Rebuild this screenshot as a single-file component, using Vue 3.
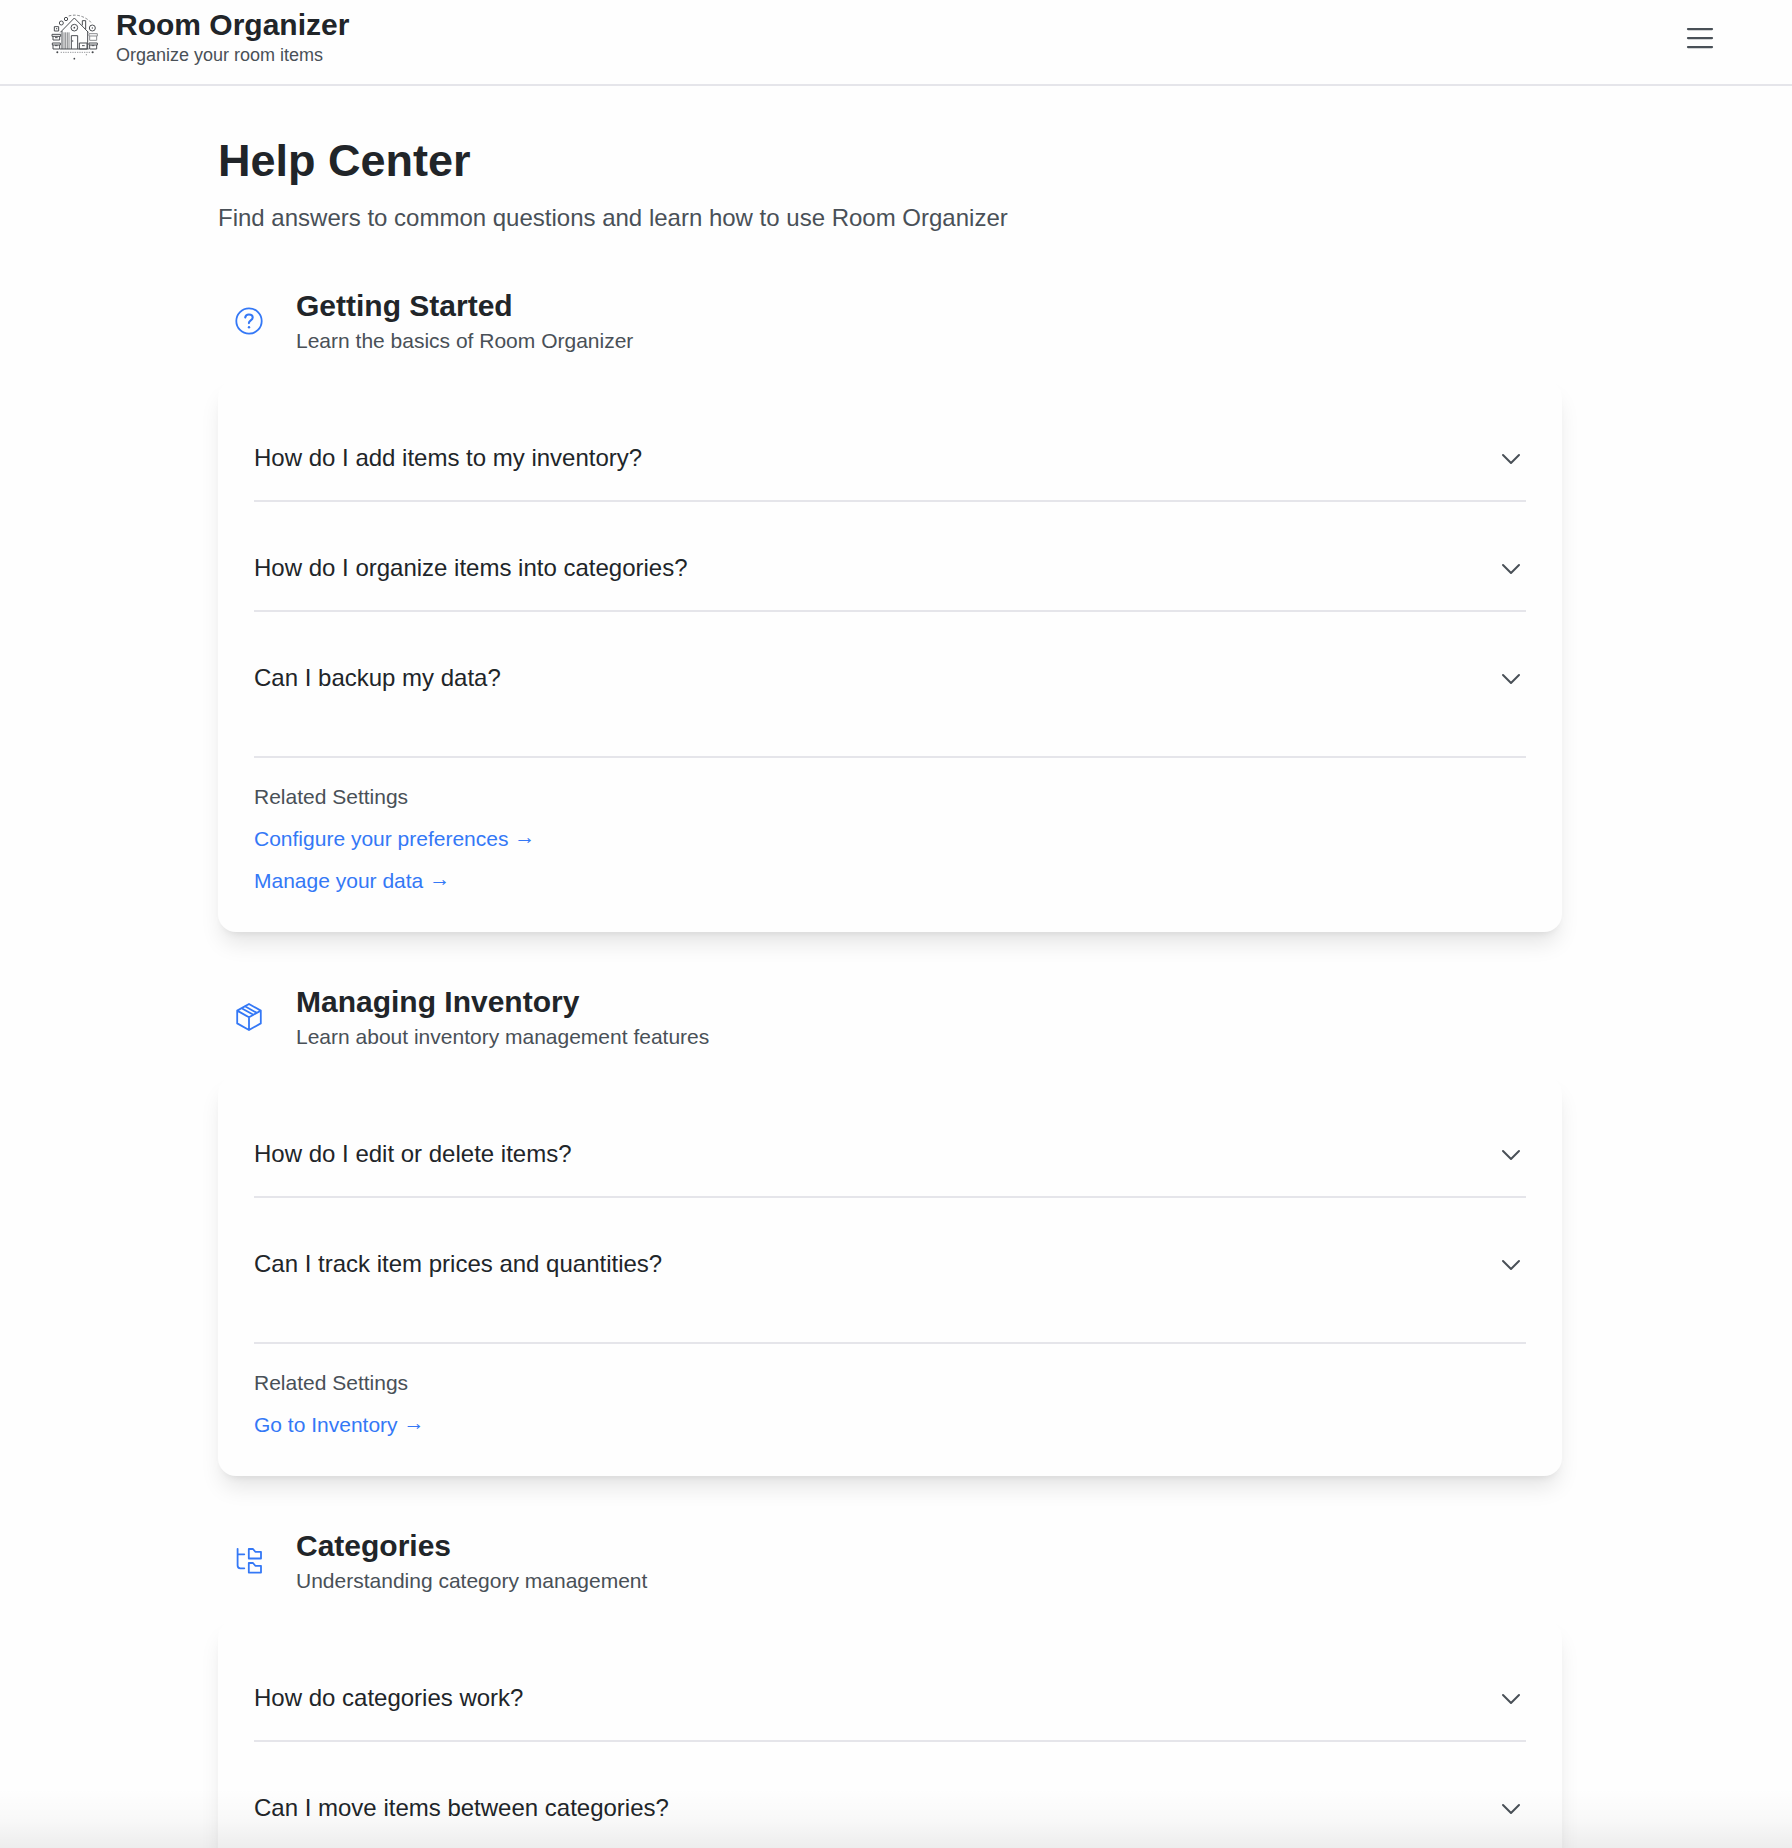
<script setup>
const sections = [
  {
    icon: 'help',
    title: 'Getting Started',
    subtitle: 'Learn the basics of Room Organizer',
    questions: [
      'How do I add items to my inventory?',
      'How do I organize items into categories?',
      'Can I backup my data?',
    ],
    links: ['Configure your preferences', 'Manage your data'],
  },
  {
    icon: 'box',
    title: 'Managing Inventory',
    subtitle: 'Learn about inventory management features',
    questions: ['How do I edit or delete items?', 'Can I track item prices and quantities?'],
    links: ['Go to Inventory'],
  },
  {
    icon: 'tree',
    title: 'Categories',
    subtitle: 'Understanding category management',
    questions: ['How do categories work?', 'Can I move items between categories?'],
    links: [],
  },
]
</script>

<template>
  <div class="page">
    <header class="topbar">
      <div class="brand">
        <svg class="logo" viewBox="33 24 144 144" fill="none" stroke="#4b4e52" stroke-width="3">
          <path d="M61 82 103 39l42 43M66 78v54M143 79v53M127 61V47h10v25" />
          <path d="M72 82v50M77 82v50M82 82v50M87 82v50" stroke-width="2" />
          <path d="M94 132V92h19v40M60 132h86" />
          <circle cx="103" cy="68" r="10" />
          <circle cx="157" cy="69" r="9" />
          <circle cx="64" cy="54" r="6" />
          <circle cx="78" cy="42" r="5" />
          <path d="M86 33q32-9 62 14l8 9" stroke-dasharray="8 5" stroke-width="2" />
          <path d="M43 65h13v13H43zM36 88h26v6H36zM39 94v11h20V94M37 114h24v6H37zM39 120v12h20v-12" />
          <path d="M147 86h25v7h-25zM149 93v13h21V93" stroke="#8b8d90" />
          <path d="M118 114h23v18h-23zM147 114h25v6h-25zM149 120v12h21v-12M45 98h8M45 122h8M155 122h8M126 122h8" />
          <path d="M62 142h92" stroke="#9b9da0" stroke-dasharray="4 3" />
          <g fill="#44474b" stroke="none">
            <circle cx="103" cy="68" r="2.5" /><circle cx="157" cy="69" r="2" />
            <circle cx="50" cy="71" r="2" /><circle cx="98" cy="108" r="2" />
            <circle cx="52" cy="142" r="3" /><circle cx="158" cy="142" r="3" />
            <circle cx="103" cy="161" r="2.6" /><circle cx="139" cy="149" r="1.5" />
          </g>
        </svg>
        <div>
          <div class="brand-name">Room Organizer</div>
          <div class="brand-tag">Organize your room items</div>
        </div>
      </div>
      <button class="menu" aria-label="Menu">
        <svg viewBox="0 0 24 24" fill="none" stroke="currentColor" stroke-width="1.5" stroke-linecap="round">
          <path d="M4 6h16M4 12h16M4 18h16" />
        </svg>
      </button>
    </header>

    <main class="content">
      <h1>Help Center</h1>
      <p class="lead">Find answers to common questions and learn how to use Room Organizer</p>

      <section v-for="s in sections" :key="s.title">
        <div class="section-head">
          <div class="icon-box">
            <svg v-if="s.icon === 'help'" viewBox="0 0 28 28">
              <circle cx="14" cy="14" r="12.7" />
              <path d="M10.2 10.5c.3-2 1.8-3 3.7-3 2.2 0 3.8 1.2 3.8 3.1 0 2.9-3.8 2.8-3.8 5.5" stroke-width="2.1" />
              <circle cx="14" cy="20.2" r="1.2" fill="currentColor" stroke="none" />
            </svg>
            <svg v-else-if="s.icon === 'box'" viewBox="0 0 28 28">
              <path d="M14 1 25.8 7.6v12.8L14 27 2.2 20.4V7.6zM2.2 7.6 14 14.3l11.8-6.7M14 14.3V27M10 3.3l11.8 6.6M6.6 5.2l11.8 6.6" />
            </svg>
            <svg v-else viewBox="0 0 28 28">
              <path d="M2.6 1.8v16.8q0 2.7 2.7 2.7h4M2.6 7.3h6.7" />
              <path d="M13.8 2h4.2l2.3 2.8H26v6.7H13.8zM13.8 16H18l2.3 2.8H26v6.8H13.8z" />
            </svg>
          </div>
          <div>
            <h2>{{ s.title }}</h2>
            <p>{{ s.subtitle }}</p>
          </div>
        </div>
        <div class="card">
          <div
            v-for="(q, i) in s.questions"
            :key="q"
            class="question"
            :class="{ last: i === s.questions.length - 1 }"
          >
            <span>{{ q }}</span>
            <svg class="chevron" viewBox="0 0 24 24"><path d="m4 9 8 8 8-8" /></svg>
          </div>
          <div v-if="s.links.length" class="related">
            <p>Related Settings</p>
            <a v-for="l in s.links" :key="l">{{ l }} <span class="arrow">→</span></a>
          </div>
        </div>
      </section>
    </main>
    <div class="bottom-fade"></div>
  </div>
</template>

<style>
body { margin: 0; background: #fefefe; }
</style>

<style scoped>
.page {
  position: relative;
  height: 1848px;
  overflow: hidden;
  background: #fefefe;
  color: #212529;
  font-family: "Liberation Sans", Arial, sans-serif;
}
h1, h2, p { margin: 0; }
.topbar {
  box-sizing: border-box;
  height: 86px;
  padding: 7px 74px 0 51px;
  border-bottom: 2px solid #e5e5ea;
  display: flex;
  align-items: flex-start;
  justify-content: space-between;
}
.brand { display: flex; gap: 17px; }
.logo { width: 48px; height: 48px; margin-top: 6px; }
.brand-name { font-size: 30px; line-height: 36px; font-weight: 700; }
.brand-tag { font-size: 18px; line-height: 24px; color: #495057; }
.menu {
  margin: 13px 0 0;
  padding: 0;
  border: 0;
  background: none;
  color: #495057;
  width: 36px;
  height: 36px;
}
.menu svg { display: block; width: 36px; height: 36px; }
.content { width: 1344px; margin-left: 218px; padding-top: 45px; }
h1 { font-size: 45px; line-height: 60px; }
.lead { margin-top: 9px; font-size: 24px; line-height: 36px; color: #495057; }
section { margin-top: 52px; }
.section-head { display: flex; gap: 16px; height: 68px; }
.icon-box {
  width: 62px;
  height: 66px;
  display: flex;
  align-items: center;
  justify-content: center;
  color: #3478f6;
}
.icon-box svg {
  width: 28px;
  height: 28px;
  fill: none;
  stroke: currentColor;
  stroke-width: 1.8;
  stroke-linecap: round;
  stroke-linejoin: round;
}
h2 { font-size: 30px; line-height: 36px; }
.section-head p { margin-top: 2px; font-size: 21px; line-height: 30px; color: #495057; }
.card {
  margin-top: 24px;
  padding: 12px 36px 36px;
  border-radius: 18px;
  background: #fefefe;
  box-shadow: 0 15px 22.5px -4.5px rgba(0, 0, 0, 0.1), 0 6px 9px -6px rgba(0, 0, 0, 0.1);
}
.question {
  display: flex;
  align-items: center;
  justify-content: space-between;
  padding: 48px 3px 24px 0;
  border-bottom: 2px solid #e5e5ea;
  font-size: 24px;
  line-height: 36px;
}
.question.last { border-bottom: 0; }
.chevron {
  width: 24px;
  height: 24px;
  fill: none;
  stroke: #495057;
  stroke-width: 2;
  stroke-linecap: round;
  stroke-linejoin: round;
}
.related {
  margin-top: 36px;
  padding-top: 24px;
  border-top: 2px solid #e5e5ea;
  display: flex;
  flex-direction: column;
  align-items: flex-start;
  gap: 12px;
  font-size: 21px;
  line-height: 30px;
  color: #495057;
}
.related a { color: #3478f6; }
.arrow { line-height: 0; vertical-align: 2px; }
.bottom-fade {
  position: absolute;
  left: 0;
  right: 0;
  bottom: 0;
  height: 60px;
  background: linear-gradient(rgba(0, 0, 0, 0), rgba(0, 0, 0, 0.02) 50%, rgba(0, 0, 0, 0.065));
  pointer-events: none;
}
</style>
